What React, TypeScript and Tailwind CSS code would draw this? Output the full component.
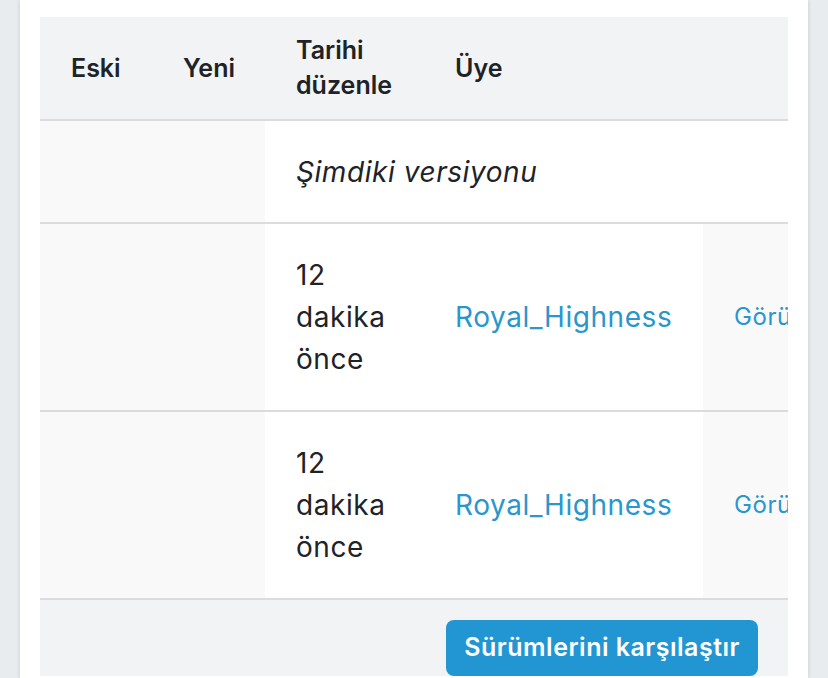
import React from 'react';

const rows = [
  { when: '12 dakika önce', user: 'Royal_Highness' },
  { when: '12 dakika önce', user: 'Royal_Highness' },
];

const font = { fontFamily: 'Inter, "Liberation Sans", sans-serif' };

export default function App() {
  return (
    <div className="h-[678px] overflow-hidden bg-[#e9ecef] px-5" style={font}>
      <div className="h-full bg-white px-5 pt-[17px] shadow-[0_0_4px_rgba(0,0,0,0.15)]">
        <div className="overflow-hidden">
          <table className="w-[900px] table-fixed border-collapse text-[#1d2327]">
            <colgroup>
              <col className="w-[112px]" />
              <col className="w-[113px]" />
              <col className="w-[159px]" />
              <col className="w-[279px]" />
              <col className="w-[237px]" />
            </colgroup>
            <thead>
              <tr className="h-[103px] border-b-2 border-[#dcdcde] bg-[#f2f3f5] text-left text-[25px] font-semibold leading-[35px]">
                <th className="pl-[31px] font-semibold">Eski</th>
                <th className="pl-[31px] font-semibold">Yeni</th>
                <th className="pl-[31px] font-semibold">Tarihi düzenle</th>
                <th className="pl-[31px] font-semibold">Üye</th>
                <th />
              </tr>
            </thead>
            <tbody className="text-[28px] leading-[42px] tracking-[0.02em]">
              <tr className="h-[103px] border-b-2 border-[#dcdcde]">
                <td className="bg-[#f9f9f9]" />
                <td className="bg-[#f9f9f9]" />
                <td colSpan={3} className="pl-[31px] italic">
                  Şimdiki versiyonu
                </td>
              </tr>
              {rows.map((r, i) => (
                <tr key={i} className="border-b-2 border-[#dcdcde]">
                  <td className="bg-[#f9f9f9]" />
                  <td className="bg-[#f9f9f9]" />
                  <td className="px-[31px] py-[30px]">{r.when}</td>
                  <td className="px-[31px] text-[#2a96cd]">{r.user}</td>
                  <td className="whitespace-nowrap bg-[#f9f9f9] pl-[31px] text-[24px] text-[#2a96cd]">
                    Görüntüle
                  </td>
                </tr>
              ))}
            </tbody>
          </table>
        </div>
        <div className="flex justify-end bg-[#f2f3f5] pr-[30px] pt-5">
          <button className="h-[56px] rounded-lg bg-[#2196d3] px-[18px] text-[25px] font-semibold tracking-[0.02em] text-white">
            Sürümlerini karşılaştır
          </button>
        </div>
      </div>
    </div>
  );
}
